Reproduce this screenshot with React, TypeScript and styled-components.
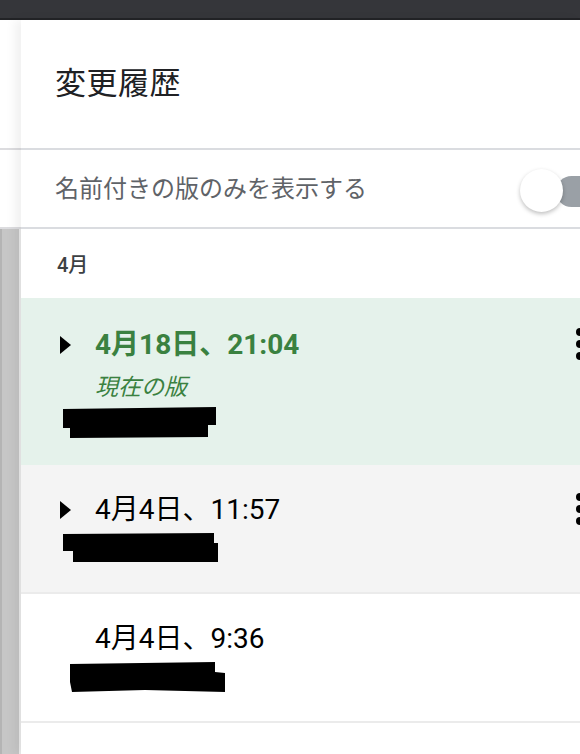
import styled, { createGlobalStyle } from 'styled-components';

const GlobalStyle = createGlobalStyle`
  html, body {
    margin: 0;
    padding: 0;
    background: #ffffff;
    overflow: hidden;
  }
  body {
    font-family: Roboto, "Noto Sans CJK JP", sans-serif;
  }
`;

type Tone = 'current' | 'hover' | 'plain';

type Version = {
  title: string;
  tone: Tone;
  caret?: boolean;
  menu?: boolean;
  redaction: string;
};

const versions: Version[] = [
  {
    title: '4月18日、21:04',
    tone: 'current',
    caret: true,
    menu: true,
    redaction: '0,2 153,0 153,18 145,18 145,30 7,31 7,21 0,21',
  },
  {
    title: '4月4日、11:57',
    tone: 'hover',
    caret: true,
    menu: true,
    redaction: '0,1 151,0 151,10 155,10 155,29 10,29 10,18 0,18',
  },
  {
    title: '4月4日、9:36',
    tone: 'plain',
    redaction: '7,2 152,0 152,10 162,11 162,30 82,28 9,30 7,20',
  },
];

const toneBg: Record<Tone, string> = {
  current: '#e5f2eb',
  hover: '#f4f4f4',
  plain: '#ffffff',
};

export default function App() {
  return (
    <>
      <GlobalStyle />
      <Page>
        <TopBar />
        <Body>
          <DocEdge>
            <EdgeBlock $height={128} />
            <EdgeBlock $height={77} />
            <EdgeScroll />
          </DocEdge>
          <Panel>
            <PanelHeader>
              <PanelTitle>変更履歴</PanelTitle>
            </PanelHeader>
            <ToggleRow>
              <ToggleLabel>名前付きの版のみを表示する</ToggleLabel>
              <Switch>
                <SwitchTrack />
                <SwitchThumb />
              </Switch>
            </ToggleRow>
            <MonthLabel>4月</MonthLabel>
            {versions.map((v) => (
              <VersionItem key={v.title} $tone={v.tone}>
                <VersionHead>
                  <CaretCell>
                    {v.caret && (
                      <svg width="11" height="18" viewBox="0 0 11 18">
                        <polygon points="0,0 11,9 0,18" fill="#000" />
                      </svg>
                    )}
                  </CaretCell>
                  <VersionText>
                    <VersionTitle $current={v.tone === 'current'}>{v.title}</VersionTitle>
                    {v.tone === 'current' && <CurrentTag>現在の版</CurrentTag>}
                  </VersionText>
                  {v.menu && (
                    <Kebab>
                      <Dot />
                      <Dot />
                      <Dot />
                    </Kebab>
                  )}
                </VersionHead>
                <Redaction width="165" height="32" viewBox="0 0 165 32">
                  <polygon points={v.redaction} fill="#000" />
                </Redaction>
              </VersionItem>
            ))}
          </Panel>
        </Body>
      </Page>
    </>
  );
}

const Page = styled.div`
  display: flex;
  flex-direction: column;
  width: 580px;
  height: 754px;
  overflow: hidden;
`;

const TopBar = styled.div`
  flex: 0 0 18px;
  background: #35363a;
  border-bottom: 2px solid #222326;
`;

const Body = styled.div`
  flex: 1;
  display: flex;
  flex-direction: row;
  min-height: 0;
`;

const DocEdge = styled.div`
  flex: 0 0 21px;
  display: flex;
  flex-direction: column;
  background: #ffffff;
`;

const EdgeBlock = styled.div<{ $height: number }>`
  flex: 0 0 ${(p) => p.$height}px;
  border-bottom: 2px solid #dcdcdf;
`;

const EdgeScroll = styled.div`
  flex: 1;
  background: #c6c6c6;
  border-left: 2px solid #b4b4b4;
  border-right: 2px solid #ececec;
`;

const Panel = styled.div`
  flex: 1;
  display: flex;
  flex-direction: column;
  background: #ffffff;
  overflow: hidden;
  box-shadow: -6px 0 10px rgba(0, 0, 0, 0.06);
  position: relative;
`;

const PanelHeader = styled.div`
  flex: 0 0 130px;
  display: flex;
  align-items: center;
  padding: 0 0 6px 34px;
  box-sizing: border-box;
  border-bottom: 2px solid #dadce0;
`;

const PanelTitle = styled.h1`
  margin: 0;
  font-family: "Noto Sans CJK JP", sans-serif;
  font-size: 31px;
  line-height: 40px;
  font-weight: 400;
  color: #202124;
  letter-spacing: 0.5px;
`;

const ToggleRow = styled.div`
  flex: 0 0 77px;
  display: flex;
  align-items: center;
  justify-content: space-between;
  padding-left: 34px;
  border-bottom: 2px solid #dadce0;
`;

const ToggleLabel = styled.span`
  font-family: "Noto Sans CJK JP", sans-serif;
  font-size: 24px;
  line-height: 30px;
  color: #5f6368;
  margin-top: -3px;
`;

const Switch = styled.div`
  position: relative;
  flex: 0 0 62px;
  height: 44px;
  margin-right: -2px;
  margin-top: 5px;
`;

const SwitchTrack = styled.div`
  position: absolute;
  left: 36px;
  top: 7px;
  width: 60px;
  height: 31px;
  border-radius: 16px;
  background: #9aa0a6;
`;

const SwitchThumb = styled.div`
  position: absolute;
  left: 0;
  top: 0;
  width: 43px;
  height: 43px;
  border-radius: 50%;
  background: #ffffff;
  box-shadow: 0 2px 4px rgba(0, 0, 0, 0.25);
`;

const MonthLabel = styled.div`
  flex: 0 0 69px;
  box-sizing: border-box;
  padding: 24px 0 0 36px;
  font-size: 20px;
  line-height: 24px;
  font-weight: 500;
  color: #3c4043;
`;

const VersionItem = styled.div<{ $tone: Tone }>`
  display: flex;
  flex-direction: column;
  padding: ${(p) => (p.$tone === 'current' ? '31px 0 26px 34px' : '29px 0 27px 34px')};
  background: ${(p) => toneBg[p.$tone]};
  border-bottom: ${(p) => (p.$tone === 'current' ? 'none' : '2px solid #ebebeb')};
`;

const VersionHead = styled.div`
  display: flex;
  align-items: flex-start;
`;

const CaretCell = styled.div`
  flex: 0 0 40px;
  padding: 7px 0 0 5px;
  box-sizing: border-box;
`;

const VersionText = styled.div`
  flex: 1;
  display: flex;
  flex-direction: column;
`;

const VersionTitle = styled.div<{ $current?: boolean }>`
  font-size: 28px;
  line-height: 32px;
  font-weight: ${(p) => (p.$current ? 700 : 400)};
  color: ${(p) => (p.$current ? '#3a8140' : '#000000')};
`;

const CurrentTag = styled.div`
  font-family: "Noto Sans CJK JP", sans-serif;
  font-size: 23px;
  line-height: 30px;
  margin-top: 9px;
  font-style: italic;
  color: #3a8140;
`;

const Kebab = styled.div`
  display: flex;
  flex-direction: column;
  gap: 4px;
  margin-right: -4px;
  margin-top: -1px;
`;

const Dot = styled.span`
  width: 8px;
  height: 8px;
  border-radius: 50%;
  background: #000;
`;

const Redaction = styled.svg`
  display: block;
  margin: 7px 0 0 8px;
`;
